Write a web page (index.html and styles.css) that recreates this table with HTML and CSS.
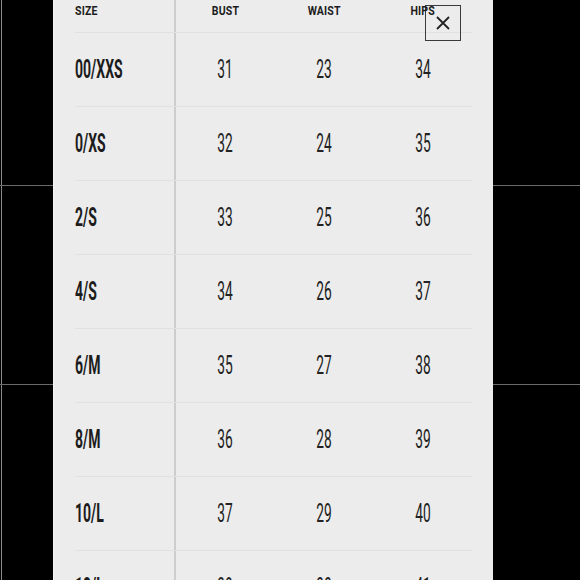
FILE: index.html
```html
<!DOCTYPE html>
<html>
<head>
<meta charset="utf-8">
<link rel="stylesheet" href="styles.css">
</head>
<body>
<div class="stage">
  <div class="panel">
    <button class="close" aria-label="Close">
      <svg width="14" height="14" viewBox="0 0 14 14"><path d="M1 1 L13 13 M13 1 L1 13" stroke="#222" stroke-width="1.8" fill="none"/></svg>
    </button>
    <div class="table">
      <div class="row head">
        <div class="cell size"><span class="h">SIZE</span></div>
        <div class="cell"><span class="h">BUST</span></div>
        <div class="cell"><span class="h">WAIST</span></div>
        <div class="cell"><span class="h">HIPS</span></div>
      </div>
      <div class="row"><div class="cell size"><span class="lbl">00/XXS</span></div><div class="cell"><span class="num">31</span></div><div class="cell"><span class="num">23</span></div><div class="cell"><span class="num">34</span></div></div>
      <div class="row"><div class="cell size"><span class="lbl">0/XS</span></div><div class="cell"><span class="num">32</span></div><div class="cell"><span class="num">24</span></div><div class="cell"><span class="num">35</span></div></div>
      <div class="row"><div class="cell size"><span class="lbl">2/S</span></div><div class="cell"><span class="num">33</span></div><div class="cell"><span class="num">25</span></div><div class="cell"><span class="num">36</span></div></div>
      <div class="row"><div class="cell size"><span class="lbl">4/S</span></div><div class="cell"><span class="num">34</span></div><div class="cell"><span class="num">26</span></div><div class="cell"><span class="num">37</span></div></div>
      <div class="row"><div class="cell size"><span class="lbl">6/M</span></div><div class="cell"><span class="num">35</span></div><div class="cell"><span class="num">27</span></div><div class="cell"><span class="num">38</span></div></div>
      <div class="row"><div class="cell size"><span class="lbl">8/M</span></div><div class="cell"><span class="num">36</span></div><div class="cell"><span class="num">28</span></div><div class="cell"><span class="num">39</span></div></div>
      <div class="row"><div class="cell size"><span class="lbl">10/L</span></div><div class="cell"><span class="num">37</span></div><div class="cell"><span class="num">29</span></div><div class="cell"><span class="num">40</span></div></div>
      <div class="row"><div class="cell size"><span class="lbl">12/L</span></div><div class="cell"><span class="num">38</span></div><div class="cell"><span class="num">30</span></div><div class="cell"><span class="num">41</span></div></div>
    </div>
  </div>
</div>
</body>
</html>
```
FILE: styles.css
```css
html, body {
  margin: 0;
  padding: 0;
}
body {
  width: 580px;
  height: 580px;
  overflow: hidden;
  background-color: #000;
  background-image:
    linear-gradient(#6a6a6a, #6a6a6a),
    linear-gradient(#6a6a6a, #6a6a6a),
    linear-gradient(#8a8a8a, #8a8a8a);
  background-size: 100% 1px, 100% 1px, 1px 100%;
  background-position: 0 185px, 0 384px, 1px 0;
  background-repeat: no-repeat;
  font-family: Roboto, "Liberation Sans", sans-serif;
  color: #1c1c1c;
}
.stage {
  display: flex;
  height: 580px;
  padding-left: 53px;
}
.panel {
  position: relative;
  box-sizing: border-box;
  width: 440px;
  height: 640px;
  flex: none;
  background: #ececec;
  border-left: 1px solid #f4f4f4;
  padding: 0 21px 0 21px;
}
.table {
  display: flex;
  flex-direction: column;
}
.row {
  display: grid;
  grid-template-columns: 101px 1fr 1fr 1fr;
  height: 73px;
  border-bottom: 1px solid #e1e1e1;
  align-items: center;
}
.row.head {
  height: 32px;
  align-items: start;
}
.cell {
  height: 100%;
  display: flex;
  align-items: center;
  justify-content: center;
}
.head .cell {
  align-items: flex-start;
  padding-top: 2px;
  box-sizing: border-box;
}
.cell.size {
  justify-content: flex-start;
  border-right: 2px solid #cdcdcd;
}
.h {
  display: inline-block;
  font-weight: 700;
  font-size: 13.5px;
  letter-spacing: 0.2px;
  transform: scaleX(0.78);
}
.cell.size .h, .cell.size .lbl {
  transform-origin: left center;
}
.lbl {
  display: inline-block;
  font-weight: 700;
  font-size: 25px;
  transform: scaleX(0.56);
}
.num {
  display: inline-block;
  font-weight: 400;
  font-size: 25px;
  transform: scaleX(0.55);
  color: #222;
}
.close {
  position: absolute;
  left: 371px;
  top: 5px;
  width: 36px;
  height: 36px;
  box-sizing: border-box;
  border: 1.5px solid #3a3a3a;
  background: transparent;
  padding: 0;
  display: flex;
  align-items: center;
  justify-content: center;
}
.close svg {
  display: block;
}
```
